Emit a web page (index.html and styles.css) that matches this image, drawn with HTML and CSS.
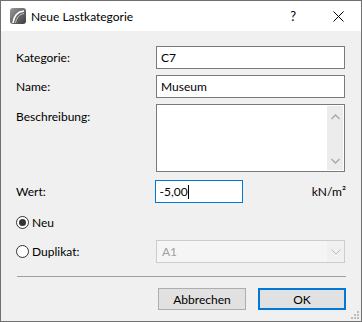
FILE: index.html
```html
<!DOCTYPE html>
<html lang="de">
<head>
  <meta charset="UTF-8" />
  <title>Neue Lastkategorie</title>
  <link rel="stylesheet" href="styles.css">
</head>
<body>
  <div class="window">
    <div class="titlebar">
      <svg class="app-icon" width="16" height="16" viewBox="0 0 16 16">
        <defs>
          <linearGradient id="g" x1="0" y1="0" x2="1" y2="1">
            <stop offset="0" stop-color="#9a9a9a"/>
            <stop offset="1" stop-color="#3c3c3c"/>
          </linearGradient>
        </defs>
        <rect x="0" y="0" width="16" height="16" rx="3" fill="url(#g)"/>
        <path d="M3 15 C4 8 8 3.5 14 3" stroke="#fff" stroke-width="1.6" fill="none"/>
        <path d="M5.5 15 C6.5 10 9.5 6 14 5.5" stroke="#d8d8d8" stroke-width="0.8" fill="none"/>
      </svg>
      <span class="title">Neue Lastkategorie</span>
      <span class="help">?</span>
      <svg class="close" width="11" height="11" viewBox="0 0 11 11">
        <path d="M0.5 0.5 L10.5 10.5 M10.5 0.5 L0.5 10.5" stroke="#000" stroke-width="1"/>
      </svg>
    </div>

    <div class="content">
      <div class="row">
        <label class="lbl">Kategorie:</label>
        <div class="field">C7</div>
      </div>
      <div class="row">
        <label class="lbl">Name:</label>
        <div class="field">Museum</div>
      </div>
      <div class="row row-top">
        <label class="lbl lbl-top">Beschreibung:</label>
        <div class="field textarea">
          <div class="scroll">
            <svg width="9" height="6" viewBox="0 0 9 6"><path d="M0.5 5 L4.5 1 L8.5 5" stroke="#a6a6a6" stroke-width="1.3" fill="none"/></svg>
            <svg width="9" height="6" viewBox="0 0 9 6"><path d="M0.5 1 L4.5 5 L8.5 1" stroke="#a6a6a6" stroke-width="1.3" fill="none"/></svg>
          </div>
        </div>
      </div>
      <div class="row row-wert">
        <label class="lbl">Wert:</label>
        <div class="field field-focus">-5,00<span class="caret"></span></div>
        <span class="unit">kN/m²</span>
      </div>
      <div class="row row-radio">
        <span class="radio checked"></span>
        <span class="radio-lbl">Neu</span>
      </div>
      <div class="row row-dup">
        <div class="lbl radio-wrap">
          <span class="radio"></span>
          <span class="radio-lbl">Duplikat:</span>
        </div>
        <div class="field select-dis">
          <span>A1</span>
          <span class="sel-arrow">
            <svg width="10" height="6" viewBox="0 0 10 6"><path d="M0.5 0.5 L5 5 L9.5 0.5" stroke="#bdbdbd" stroke-width="1" fill="none"/></svg>
          </span>
        </div>
      </div>
      <div class="sep"></div>
      <div class="buttons">
        <button class="btn">Abbrechen</button>
        <button class="btn btn-default">OK</button>
      </div>
    </div>

    <svg class="grip" width="8" height="8" viewBox="0 0 8 8">
      <rect x="6" y="0" width="2" height="2" fill="#bcbcbc"/>
      <rect x="3" y="3" width="2" height="2" fill="#bcbcbc"/>
      <rect x="6" y="3" width="2" height="2" fill="#bcbcbc"/>
      <rect x="0" y="6" width="2" height="2" fill="#bcbcbc"/>
      <rect x="3" y="6" width="2" height="2" fill="#bcbcbc"/>
      <rect x="6" y="6" width="2" height="2" fill="#bcbcbc"/>
    </svg>
  </div>
</body>
</html>
```

FILE: styles.css
```css
body {
  margin: 0;
  font-family: 'Segoe UI', 'Lato', sans-serif;
  font-size: 12px;
  color: #000;
}
.window {
  position: relative;
  width: 362px;
  height: 322px;
  box-sizing: border-box;
  border: 1px solid #707070;
  background: #f0f0f0;
}
.titlebar {
  display: flex;
  align-items: center;
  height: 30px;
  background: #fff;
}
.app-icon {
  margin-left: 9px;
}
.title {
  margin-left: 5px;
  flex: 1;
}
.help {
  margin-right: 37px;
  font-size: 13px;
}
.close {
  margin-right: 17px;
}
.content {
  padding: 15px 15px 0 15px;
}
.row {
  display: flex;
  align-items: center;
  margin-bottom: 6px;
}
.row-top {
  align-items: flex-start;
  margin-bottom: 8px;
}
.lbl {
  width: 140px;
}
.lbl-top {
  padding-top: 5px;
}
.field {
  box-sizing: border-box;
  width: 189px;
  height: 23px;
  line-height: 21px;
  padding-left: 4px;
  border: 1px solid #7a7a7a;
  background: #fff;
}
.textarea {
  position: relative;
  height: 68px;
}
.scroll {
  position: absolute;
  right: 1px;
  top: 1px;
  bottom: 1px;
  width: 16px;
  background: #ececec;
  display: flex;
  flex-direction: column;
  justify-content: space-between;
  align-items: center;
  padding: 8px 0 6px;
  box-sizing: border-box;
}
.field-focus {
  width: 89px;
  border-color: #0078d7;
}
.caret {
  display: inline-block;
  width: 1px;
  height: 14px;
  background: #000;
  vertical-align: -3px;
}
.unit {
  margin-left: auto;
  margin-right: 0;
  padding-right: 0;
}
.row-wert {
  margin-bottom: 13px;
}
.row-wert .unit {
  margin-right: 0;
  margin-left: 69px;
}
.row-radio {
  height: 13px;
  margin-bottom: 11px;
}
.radio {
  display: inline-block;
  box-sizing: border-box;
  width: 13px;
  height: 13px;
  border: 1px solid #333;
  border-radius: 50%;
  background: #fff;
  position: relative;
}
.radio.checked::after {
  content: "";
  position: absolute;
  left: 2px;
  top: 2px;
  width: 7px;
  height: 7px;
  border-radius: 50%;
  background: #333;
}
.radio-lbl {
  margin-left: 3px;
}
.radio-wrap {
  display: flex;
  align-items: center;
}
.row-dup {
  margin-bottom: 13px;
}
.select-dis {
  display: flex;
  align-items: center;
  border-color: #cccccc;
  background: #f5f5f5;
  color: #a0a0a0;
  padding-left: 5px;
}
.sel-arrow {
  margin-left: auto;
  width: 17px;
  height: 21px;
  display: flex;
  align-items: center;
  justify-content: center;
  background: #f0f0f0;
}
.sep {
  width: 329px;
  height: 1px;
  background: #a0a0a0;
  margin-left: 1px;
}
.buttons {
  display: flex;
  justify-content: flex-end;
  gap: 12px;
  margin-top: 11px;
  width: 330px;
}
.btn {
  box-sizing: border-box;
  width: 88px;
  height: 22px;
  font-family: inherit;
  font-size: 12px;
  background: #e1e1e1;
  border: 1px solid #adadad;
  padding: 0;
  color: #000;
}
.btn-default {
  border: 2px solid #0078d7;
}
.grip {
  position: absolute;
  right: 2px;
  bottom: 2px;
}
```
